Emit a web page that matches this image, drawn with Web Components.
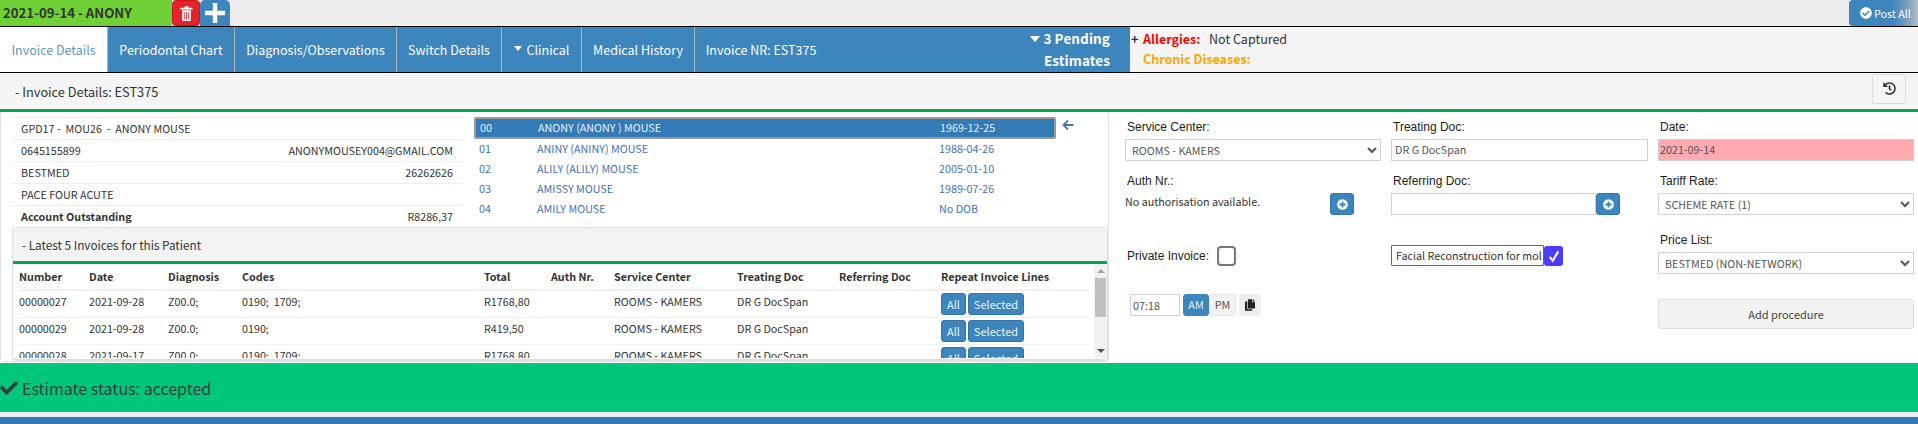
<!DOCTYPE html>
<html lang="en">
<head>
<meta charset="utf-8">
<title>Invoice Details</title>
<style>
html,body{margin:0;padding:0;background:#fff}
body{font-family:"Noto Sans CJK SC","Noto Sans",sans-serif;color:#333;font-size:11px}
</style>
</head>
<body>
<app-shell></app-shell>
<script>
const ICONS={
 history:'<svg viewBox="0 0 512 512" width="13" height="13"><path fill="currentColor" d="M504 255.531c.253 136.64-111.18 248.372-247.82 248.468-59.015.042-113.223-20.53-155.822-54.911-11.077-8.94-11.905-25.541-1.839-35.607l11.267-11.267c8.609-8.609 22.353-9.551 31.891-1.984C173.062 425.135 212.781 440 256 440c101.705 0 184-82.311 184-184 0-101.705-82.311-184-184-184-48.814 0-93.149 18.969-126.068 49.932l50.754 50.754c10.08 10.08 2.941 27.314-11.313 27.314H24c-8.837 0-16-7.163-16-16V38.627c0-14.254 17.234-21.393 27.314-11.314l49.372 49.372C129.209 34.136 189.552 8 256 8c136.81 0 247.747 110.78 248 247.531zm-180.912 78.784l9.823-12.63c8.138-10.463 6.253-25.542-4.21-33.679L288 256.349V152c0-13.255-10.745-24-24-24h-16c-13.255 0-24 10.745-24 24v135.651l65.409 50.874c10.463 8.137 25.541 6.253 33.679-4.21z"/></svg>',
 checkCircle:'<svg viewBox="0 0 512 512" width="12" height="12"><path fill="currentColor" d="M504 256c0 136.967-111.033 248-248 248S8 392.967 8 256 119.033 8 256 8s248 111.033 248 248zM227.314 387.314l184-184c6.248-6.248 6.248-16.379 0-22.627l-22.627-22.627c-6.248-6.249-16.379-6.249-22.628 0L216 308.118l-70.059-70.059c-6.248-6.248-16.379-6.248-22.628 0l-22.627 22.627c-6.248 6.248-6.248 16.379 0 22.627l104 104c6.249 6.249 16.379 6.249 22.628.001z"/></svg>',
 check:'<svg viewBox="0 0 512 512" width="18" height="18"><path fill="currentColor" d="M173.898 439.404l-166.4-166.4c-9.997-9.997-9.997-26.206 0-36.204l36.203-36.204c9.997-9.998 26.207-9.998 36.204 0L192 312.69 432.095 72.596c9.997-9.997 26.207-9.997 36.204 0l36.203 36.204c9.997 9.997 9.997 26.206 0 36.204l-294.4 294.401c-9.998 9.997-26.207 9.997-36.204-.001z"/></svg>',
 copy:'<svg viewBox="0 0 448 512" width="10" height="12"><path fill="currentColor" d="M320 448v40c0 13.255-10.745 24-24 24H24c-13.255 0-24-10.745-24-24V120c0-13.255 10.745-24 24-24h72v296c0 30.879 25.121 56 56 56h168zm0-344V0H152c-13.255 0-24 10.745-24 24v368c0 13.255 10.745 24 24 24h272c13.255 0 24-10.745 24-24V128H344c-13.2 0-24-10.8-24-24zm120.971-31.029L375.029 7.029A24 24 0 0 0 358.059 0H352v96h96v-6.059a24 24 0 0 0-7.029-16.97z"/></svg>',
 trash:'<svg viewBox="0 0 14 18" width="13" height="16"><path fill="#fff" d="M1 3h3.6l.7-2h3.4l.7 2H13a.8.8 0 0 1 0 2H1a.8.8 0 0 1 0-2zM2 6h10v10.2c0 1-.7 1.8-1.7 1.8H3.7C2.7 18 2 17.200 2 16.200z"/><path stroke="#e8222b" stroke-width="1" d="M4.500 8v8M7 8v8M9.500 8v8"/></svg>',
 plus:'<svg viewBox="0 0 20 20" width="20" height="20"><path fill="#fff" d="M7.800 0h4.400v7.800H20v4.400h-7.800V20H7.800v-7.800H0V7.800h7.800z"/></svg>',
 plusCircle:'<svg viewBox="0 0 12 12" width="11" height="11"><circle cx="6" cy="6" r="5.800" fill="#fff"/><path fill="#3c85bd" d="M5 2.600h2V5h2.400v2H7v2.400H5V7H2.600V5H5z"/></svg>',
 arrow:'<svg viewBox="0 0 12 12" width="12" height="12"><path fill="none" stroke="#3c78b4" stroke-width="1.800" d="M6 1.500 1.500 6 6 10.500M1.800 6H11.500"/></svg>',
 tick:'<svg viewBox="0 0 14 16" width="12" height="15"><path fill="none" stroke="#fff" stroke-width="2.400" d="M2 8.500 5.500 13 12 2"/></svg>'
};
const BLUE='#3c85bd';
function def(name,css,html){
 customElements.define(name,class extends HTMLElement{
  constructor(){super();this.attachShadow({mode:'open'}).innerHTML='<style>'+css+'</style>'+html;}
 });
}
def('app-shell',`:host{display:block;width:1918px;height:424px;overflow:hidden;background:#fff}
.content{display:flex;height:249px}
.gap{height:5px;background:#eee}
.blue{height:7px;background:#337ab7}`,`
<top-bar></top-bar><nav-bar></nav-bar>
<section-head></section-head>
<div class="content"><invoice-main></invoice-main><invoice-form></invoice-form></div>
<status-bar></status-bar><div class="gap"></div><div class="blue"></div>`);

def('top-bar',`:host{display:flex;height:26px;background:#eee;border-bottom:1px solid #000;align-items:stretch}
.name{width:172px;box-sizing:border-box;background:#6fd135;padding:0 0 0 3px;font:700 13.200px/26px "Noto Sans CJK SC",sans-serif;color:#333}
button{border:0;padding:0;margin:0;display:flex;align-items:center;justify-content:center;color:#fff}
.del{width:28px;background:#e8222b;border:1px solid #c9151e;border-radius:4px;box-sizing:border-box}
.add{width:30px;background:${BLUE};border-radius:5px 5px 0 0}
.sp{flex:1}
.post{width:69px;background:linear-gradient(90deg,${BLUE} 0,${BLUE} 62%,#7d9fb8 85%,#b6bfc6 100%);border-radius:4px 0 0 4px;font:10.750px "Noto Sans CJK SC",sans-serif;gap:2px;justify-content:flex-start;padding-left:11px;box-sizing:border-box;white-space:nowrap;overflow:hidden}`,`
<div class="name">2021-09-14 - ANONY</div>
<button class="del" aria-label="Delete">${ICONS.trash}</button>
<button class="add" aria-label="Add">${ICONS.plus}</button>
<div class="sp"></div>
<button class="post">${ICONS.checkCircle}<span>Post All</span></button>`);

def('nav-tab',`:host{display:flex;align-items:center;justify-content:center;box-sizing:border-box;height:45px;color:#fff;font-size:12.500px;border-right:1px solid #a9b4bd;white-space:nowrap;flex:none}
:host([active]){background:#fff;color:#5f93c6}`,`<slot></slot>`);

def('nav-bar',`:host{display:flex;height:45px;border-bottom:1px solid #000;background:#f5f5f5}
.tabs{display:flex;width:1130px;background:${BLUE};flex:none}
.pending{margin-left:auto;width:96px;margin-right:20px;color:#fff;font-weight:700;font-size:13.500px;line-height:22px;text-align:right;letter-spacing:.1px}
.caret{display:inline-block;border:5px solid transparent;border-top:6px solid #fff;border-bottom:0;margin:0 3px 2px 0}
.c2{display:inline-block;border:4.500px solid transparent;border-top:5px solid #fff;border-bottom:0;margin:0 5px 2px 0}`,`
<div class="tabs">
<nav-tab active style="width:108px">Invoice Details</nav-tab>
<nav-tab style="width:127px">Periodontal Chart</nav-tab>
<nav-tab style="width:162px">Diagnosis/Observations</nav-tab>
<nav-tab style="width:105px">Switch Details</nav-tab>
<nav-tab style="width:80px"><span class="c2"></span>Clinical</nav-tab>
<nav-tab style="width:113px">Medical History</nav-tab>
<nav-tab style="border:0;width:128px;padding-left:4px">Invoice NR: EST375</nav-tab>
<div class="pending"><span class="caret"></span>3 Pending Estimates</div>
</div>
<allergy-box></allergy-box>`);

def('allergy-box',`:host{display:block;flex:1;font-size:12.500px;line-height:20px;padding:2px 0 0 1px;color:#333}
.row{display:flex}
.p{width:12px;font-weight:700}
b.r{color:#f00;width:66px}
b.o{color:#ffa500}`,`
<div class="row"><span class="p">+</span><b class="r">Allergies:</b><span>Not Captured</span></div>
<div class="row"><span class="p"></span><b class="o">Chronic Diseases:</b></div>`);

def('section-head',`:host{display:flex;height:36px;background:#f5f5f5;border-bottom:3px solid #00a651;align-items:center;padding:0 12px 0 15px;font-size:12.750px}
.sp{flex:1}
button{width:34px;height:30px;margin-top:-5px;background:#f5f5f5;border:1px solid #ddd;border-radius:3px;display:flex;align-items:center;justify-content:center;color:#333;padding:0}`,
`<span>- Invoice Details: EST375</span><div class="sp"></div><button aria-label="History">${ICONS.history}</button>`);

def('invoice-main',`:host{display:block;width:1109px;box-sizing:border-box;flex:none;height:250px;padding:5px 0 0 11px;border-left:1px solid #e3e3e3;border-right:1px solid #e3e3e3;border-bottom:1px solid #e3e3e3;border-radius:0 0 4px 4px}
.top{display:flex;height:110px;margin-left:-1px}`,`
<div class="top"><patient-info></patient-info><patient-list></patient-list></div>
<invoice-panel></invoice-panel>`);

def('patient-info',`:host{display:block;width:452px;flex:none;font-size:10.750px;color:#333}
.r{display:flex;justify-content:space-between;height:21px;line-height:21px;border-top:1px solid #eee;padding:0 10px}
b{font-weight:700}`,`
<div class="r"><span>GPD17 -&nbsp; MOU26 &nbsp;-&nbsp; ANONY MOUSE</span></div>
<div class="r"><span>0645155899</span><span>ANONYMOUSEY004@GMAIL.COM</span></div>
<div class="r"><span>BESTMED</span><span>26262626</span></div>
<div class="r"><span>PACE FOUR ACUTE</span></div>
<div class="r"><b>Account Outstanding</b><span>R8286,37</span></div>`);

def('patient-list',`:host{display:block;margin-left:11px;width:600px;font-size:10.750px;color:#3f72b8}
.w{display:flex;gap:6px;align-items:flex-start}
.l{width:582px}
.o{display:grid;grid-template-columns:58px 402px 1fr;height:20px;line-height:20px;padding-left:5px}
.s{box-sizing:border-box;height:22px;line-height:18px;background:#337ab7;color:#e9f0f6;border:2px solid #999;border-radius:2px;padding-left:4px}
.a{margin-top:2px}`,`
<div class="w"><div class="l">
<div class="o s"><span>00</span><span>ANONY (ANONY ) MOUSE</span><span>1969-12-25</span></div>
<div class="o"><span>01</span><span>ANINY (ANINY) MOUSE</span><span>1988-04-26</span></div>
<div class="o"><span>02</span><span>ALILY (ALILY) MOUSE</span><span>2005-01-10</span></div>
<div class="o"><span>03</span><span>AMISSY MOUSE</span><span>1989-07-26</span></div>
<div class="o"><span>04</span><span>AMILY MOUSE</span><span>No DOB</span></div>
</div><span class="a">${ICONS.arrow}</span></div>`);

const ROWS=[['00000027','2021-09-28','Z00.0;','0190;&nbsp; 1709;','R1768,80'],['00000029','2021-09-28','Z00.0;','0190;','R419,50'],['00000028','2021-09-17','Z00.0;','0190;&nbsp; 1709;','R1768,80']];
def('invoice-panel',`:host{display:block;width:1096px;height:134px;box-sizing:border-box;border:1px solid #ddd;border-bottom:2px solid #ddd;border-radius:4px;overflow:hidden;font-size:10.750px}
.h{height:33px;line-height:33px;background:#f3f3f3;padding-left:9px;font-size:11.750px}
.g{height:3px;background:#00a651}
.b{display:flex;height:94px;overflow:hidden}
.t{width:1076px;padding-left:6px;box-sizing:border-box;flex:none}
.r{display:grid;grid-template-columns:70px 79px 74px 242px 67px 63px 123px 102px 102px 1fr;height:26px;line-height:22px;border-bottom:1px solid #f0f0f0}
.r>span{white-space:nowrap}
.hd{height:25px;line-height:26px;font-weight:700;border-bottom:2px solid #f0f0f0}
.btns{display:flex;gap:2px;padding-top:2px;height:22px}
.bt{display:block;background:${BLUE};border:1px solid #3276a8;color:#eef4f8;border-radius:3px;height:22px;box-sizing:border-box;line-height:20px;text-align:center;font-size:11px}
.a1{width:25px}.a2{width:56px}
.sb{margin-left:5px;width:14px;background:#f1f1f1;display:flex;flex-direction:column;align-items:center}
.up,.dn{height:14px;display:flex;align-items:center;justify-content:center}
.up:before{content:"";border:4px solid transparent;border-bottom:4px solid #a3a3a3;border-top:0}
.dn:before{content:"";border:4px solid transparent;border-top:4px solid #505050;border-bottom:0}
.th{width:11px;height:39px;background:#c1c1c1}
.f{flex:1}`,`
<div class="h">- Latest 5 Invoices for this Patient</div><div class="g"></div>
<div class="b"><div class="t">
<div class="r hd"><span>Number</span><span>Date</span><span>Diagnosis</span><span>Codes</span><span>Total</span><span>Auth Nr.</span><span>Service Center</span><span>Treating Doc</span><span>Referring Doc</span><span>Repeat Invoice Lines</span></div>
${ROWS.map(r=>`<div class="r"><span>${r[0]}</span><span>${r[1]}</span><span>${r[2]}</span><span>${r[3]}</span><span>${r[4]}</span><span></span><span>ROOMS - KAMERS</span><span>DR G DocSpan</span><span></span><span class="btns"><span class="bt a1">All</span><span class="bt a2">Selected</span></span></div>`).join('')}
</div><div class="sb"><div class="up"></div><div class="th"></div><div class="f"></div><div class="dn"></div></div></div>`);

def('form-label',`:host{display:block;height:20px;margin-bottom:2px;padding-left:2px;font:12px/20px "Liberation Sans",sans-serif;color:#222}`,`<slot></slot>`);
def('form-field',`:host{display:block;box-sizing:border-box;height:22px;line-height:20px;border:1px solid #d0d0dc;background:#fff;font-size:10.750px;color:#555;padding-left:3px;overflow:hidden;white-space:nowrap}`,`<slot></slot>`);

customElements.define('select-box',class extends HTMLElement{
 constructor(){super();this.attachShadow({mode:'open'});}
 connectedCallback(){
  this.shadowRoot.innerHTML=`<style>:host{display:block;height:22px}
  select{display:block;width:100%;height:22px;box-sizing:border-box;border:1px solid #d0d0dc;background:#fff;font:10.750px "Noto Sans CJK SC",sans-serif;color:#555;padding:0 0 0 2px;border-radius:0;outline:0}</style>
  <select><option>${this.getAttribute('opt')}</option></select>`;
 }
});

def('invoice-form',`:host{display:grid;grid-template-columns:256px 257px 256px;column-gap:10px;padding:5px 0 0 16px;flex:1;box-sizing:border-box;font-size:10.750px;align-items:start;color:#444}
.mt10{margin-top:10px}
.auth{display:flex;height:22px;justify-content:space-between;align-items:flex-start;width:229px;line-height:18px;color:#333}
.pb{width:24px;height:22px;background:${BLUE};border:1px solid #3276a8;border-radius:3px;box-sizing:border-box;display:flex;align-items:center;justify-content:center;flex:none}
.ref{display:flex}.ref form-field{flex:0 0 205px}
.priv{display:flex;align-items:center;margin-top:31px;height:20px;padding-left:2px;font:12px "Liberation Sans",sans-serif;color:#222;gap:8px}
.cb{display:block;width:19px;height:20px;box-sizing:border-box;border:2px solid #777;border-radius:4px;background:#fff}
.time{display:flex;margin:28px 0 0 5px;height:22px}
.tm{box-sizing:border-box;width:50px;border:1px solid #d0d0dc;line-height:22px;padding-left:2px;color:#555;margin-right:3px}
.b{box-sizing:border-box;height:22px;line-height:20px;border-radius:3px;text-align:center}
.am{width:26px;background:${BLUE};color:#e9f1f7;border:1px solid #3c85bd}
.pm{width:27px;background:#f2f2f2;border:1px solid #e6e6e6;color:#555}
.cp{width:22px;background:#eee;margin-left:3px;display:flex;align-items:center;justify-content:center;color:#222}
.fac{display:flex;margin-top:30px;height:21px}
.ft{box-sizing:border-box;width:153px;height:21px;border:1px solid #666;border-radius:1px;padding:0 3px 0 4px;line-height:19px;overflow:hidden;white-space:nowrap;color:#333}
.ck{width:19px;height:20px;box-sizing:border-box;background:#4b3cff;border-radius:3px;display:flex;align-items:center;justify-content:center;margin-top:1px}
.date{background:#ffa9b0;padding-left:1px;border-color:#c9ccd6}
.add{display:block;box-sizing:border-box;width:256px;height:30px;margin-top:25px;background:#f2f2f2;border:1px solid #ddd;border-radius:3px;text-align:center;line-height:28px;font-size:11px;color:#444}
.ll{margin-top:15px}`,`
<div>
 <form-label>Service Center:</form-label><select-box opt="ROOMS - KAMERS"></select-box>
 <form-label class="mt10">Auth Nr.:</form-label>
 <div class="auth"><span>No authorisation available.</span><span class="pb">${ICONS.plusCircle}</span></div>
 <div class="priv"><span>Private Invoice:</span><span class="cb"></span></div>
 <div class="time"><span class="tm">07:18</span><span class="b am">AM</span><span class="b pm">PM</span><span class="b cp">${ICONS.copy}</span></div>
</div>
<div>
 <form-label>Treating Doc:</form-label><form-field>DR G DocSpan</form-field>
 <form-label class="mt10">Referring Doc:</form-label>
 <div class="ref"><form-field></form-field><span class="pb">${ICONS.plusCircle}</span></div>
 <div class="fac"><span class="ft">Facial Reconstruction for mol</span><span class="ck">${ICONS.tick}</span></div>
</div>
<div>
 <form-label>Date:</form-label><form-field class="date">2021-09-14</form-field>
 <form-label class="mt10">Tariff Rate:</form-label><select-box opt="SCHEME RATE (1)"></select-box>
 <form-label class="ll">Price List:</form-label><select-box opt="BESTMED (NON-NETWORK)"></select-box>
 <span class="add">Add procedure</span>
</div>`);

def('status-bar',`:host{display:flex;align-items:center;height:49px;margin-top:2px;background:#00c77a;color:#2f3f3a;font-size:16px;gap:4px}
svg{display:block}`,`${ICONS.check}<span>Estimate status: accepted</span>`);
</script>
</body>
</html>
